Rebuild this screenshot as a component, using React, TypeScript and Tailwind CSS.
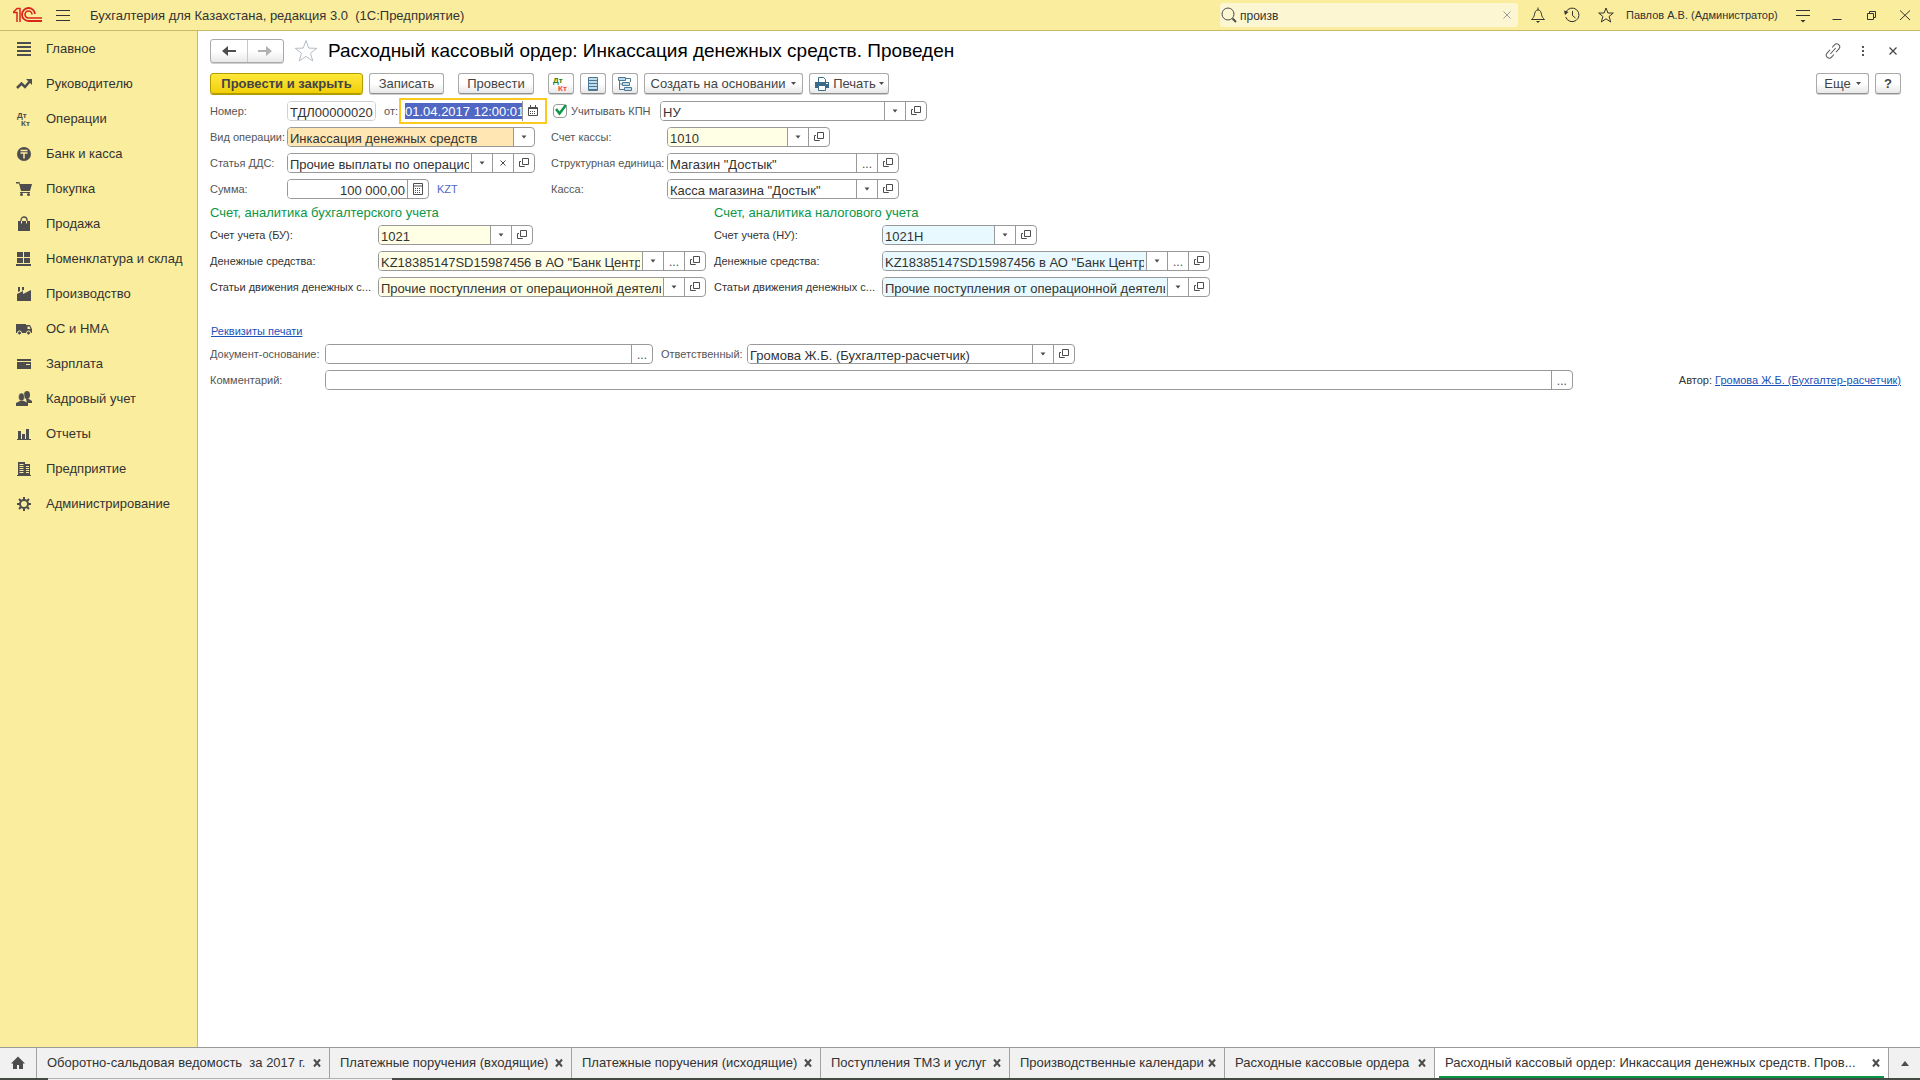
import type { ReactNode } from "react";
import clsx from "clsx";

const INK = "#4d4d4d";

function Icon({ size = 16, children }: { size?: number; children: ReactNode }) {
  return (
    <svg
      width={size}
      height={size}
      viewBox={`0 0 ${size} ${size}`}
      fill="none"
      aria-hidden="true"
      className="shrink-0"
    >
      {children}
    </svg>
  );
}

const menu: { title: string; icon: ReactNode }[] = [
  {
    title: "Главное",
    icon: <path d="M1 1h14v2H1zM1 5h14v2H1zM1 9h14v2H1zM1 13h14v2H1z" fill={INK} />,
  },
  {
    title: "Руководителю",
    icon: (
      <>
        <path d="M1 12l4.500-4.500 3.500 3.500 5-6" stroke={INK} strokeWidth="2.500" />
        <path d="M10 3h6v6z" fill={INK} />
      </>
    ),
  },
  {
    title: "Операции",
    icon: (
      <g fill={INK} fontFamily="Liberation Sans, sans-serif" fontWeight="700" fontSize="8">
        <text x="1" y="7">Дт</text>
        <text x="5" y="15">Кт</text>
      </g>
    ),
  },
  {
    title: "Банк и касса",
    icon: (
      <>
        <circle cx="8" cy="8" r="7" fill={INK} />
        <path d="M4.500 4.500h7M4.500 7h7M8 7v5.500" stroke="#fbed9e" strokeWidth="1.500" />
      </>
    ),
  },
  {
    title: "Покупка",
    icon: (
      <>
        <path d="M0 1h3.500l.5 2h12l-2 7H5L3 2.500H0z" fill={INK} />
        <path d="M4 11.500h10" stroke={INK} />
        <circle cx="5.500" cy="13.500" r="1.500" fill={INK} />
        <circle cx="12.500" cy="13.500" r="1.500" fill={INK} />
      </>
    ),
  },
  {
    title: "Продажа",
    icon: (
      <>
        <path d="M2 5h12v10H2z" fill={INK} />
        <path d="M5 8V4a3 3 0 0 1 6 0v4" stroke={INK} strokeWidth="1.300" />
        <path d="M5.500 5v2.500M10.500 5v2.500" stroke="#fbed9e" />
      </>
    ),
  },
  {
    title: "Номенклатура и склад",
    icon: <path d="M1 1h6v5H1zM8 1h6v5H8zM1 7h6v5H1zM8 7h6v5H8zM0 13h15v2H0z" fill={INK} />,
  },
  {
    title: "Производство",
    icon: <path d="M1 15V8l6-3v3l8-4v11zM2 1h2v4L2 6zM6 1h2v3L6 4.500z" fill={INK} />,
  },
  {
    title: "ОС и НМА",
    icon: (
      <>
        <path d="M0 3h10v9H0zM10 4h4l2 4v4h-6z" fill={INK} />
        <path d="M11.500 5.500h2l1 2.500h-3z" fill="#fbed9e" />
        <circle cx="3.500" cy="12" r="2" fill={INK} stroke="#fbed9e" />
        <circle cx="12.500" cy="12" r="2" fill={INK} stroke="#fbed9e" />
      </>
    ),
  },
  {
    title: "Зарплата",
    icon: <path d="M1 3h14v2H1zM1 6h14v7H1zM10 8v1h4V8z" fill={INK} fillRule="evenodd" />,
  },
  {
    title: "Кадровый учет",
    icon: (
      <g fill={INK}>
        <ellipse cx="11" cy="4" rx="3" ry="4" />
        <path d="M10 8h3l3 2v2h-5z" />
        <ellipse cx="5.500" cy="6" rx="3" ry="4" stroke="#fbed9e" strokeWidth=".5" />
        <path d="M0 15v-3l4-2h4l4 2v3z" />
      </g>
    ),
  },
  {
    title: "Отчеты",
    icon: <path d="M2 5h3v9H2zM6 8h3v6H6zM10 3h3v11h-3zM1 13h14v1H1z" fill={INK} />,
  },
  {
    title: "Предприятие",
    icon: (
      <>
        <path d="M2 1h7v13H2zM9 3h5v11H9zM1 14h14v1H1z" fill={INK} />
        <path
          d="M3.500 3.500h4M3.500 5.500h4M3.500 7.500h4M3.500 9.500h4M3.500 11.500h4M10 5.500h3M10 7.500h3M10 9.500h3M10 11.500h3"
          stroke="#fbed9e"
        />
      </>
    ),
  },
  {
    title: "Администрирование",
    icon: (
      <g stroke={INK}>
        <circle cx="8" cy="8" r="4" strokeWidth="2" />
        <path
          d="M8 1v3M8 12v3M1 8h3M12 8h3M3 3l2 2M11 11l2 2M13 3l-2 2M5 11l-2 2"
          strokeWidth="2"
        />
      </g>
    ),
  },
];

const tabs = [
  { title: "Оборотно-сальдовая ведомость  за 2017 г.", width: "w-[293px]" },
  { title: "Платежные поручения (входящие)", width: "w-[242px]" },
  { title: "Платежные поручения (исходящие)", width: "w-[249px]" },
  { title: "Поступления ТМЗ и услуг", width: "w-[189px]" },
  { title: "Производственные календари", width: "w-[215px]" },
  { title: "Расходные кассовые ордера", width: "w-[210px]" },
];

type Action = "list" | "open" | "clear" | "more" | "calc";

const actionNames: Record<Action, string> = {
  list: "Выбрать из списка",
  open: "Открыть",
  clear: "Очистить",
  more: "Выбрать",
  calc: "Калькулятор",
};

function ActionIcon({ kind }: { kind: Action }) {
  if (kind === "more") return <span className="pt-0.5 text-[12px] leading-4">...</span>;
  return (
    <Icon size={12}>
      {kind === "list" && <path d="M3.500 4.500h5L6 7.500z" fill={INK} />}
      {kind === "clear" && <path d="M3.500 3.500l5 5M8.500 3.500l-5 5" stroke={INK} />}
      {kind === "open" && (
        <path d="M4.500 1.500h6v6h-6zM3 4.500H1.500v5h5V9" stroke={INK} />
      )}
      {kind === "calc" && (
        <>
          <path d="M1.500 .5h9v11h-9zM1.500 3h9" stroke={INK} />
          <path d="M3 5.500h6M3 7.500h6M3 9.500h6" stroke={INK} strokeDasharray="1 1" />
        </>
      )}
    </Icon>
  );
}

interface FieldProps {
  id: string;
  value?: string;
  width: string;
  fill?: string;
  actions?: Action[];
  right?: boolean;
  border?: string;
}

function Field({ id, value = "", width, fill = "bg-white", actions = [], right, border = "border-[#999999]" }: FieldProps) {
  return (
    <div className={clsx("flex h-5 overflow-hidden rounded border bg-white", border, width)}>
      <input
        id={id}
        defaultValue={value}
        className={clsx(
          "min-w-0 flex-1 px-0.5 pt-1 text-[13px] leading-4 text-[#333333] outline-none",
          fill,
          right && "text-right",
        )}
      />
      {actions.map((a) => (
        <button
          key={a}
          type="button"
          aria-label={actionNames[a]}
          className="flex w-[21px] shrink-0 items-center justify-center border-l border-[#999999] text-[#4d4d4d]"
        >
          <ActionIcon kind={a} />
        </button>
      ))}
    </div>
  );
}

function Row({ label, labelWidth, children, ...field }: FieldProps & { label: string; labelWidth: string; children?: ReactNode }) {
  return (
    <div className="flex h-5 items-center">
      <label htmlFor={field.id} className={clsx("shrink-0 whitespace-nowrap", labelWidth)}>
        {label}
      </label>
      <Field {...field} />
      {children}
    </div>
  );
}

function ToolButton({ className, children, label }: { className?: string; children: ReactNode; label?: string }) {
  return (
    <button
      type="button"
      aria-label={label}
      className={clsx(
        "flex h-[21px] items-center justify-center whitespace-nowrap rounded-[3px] border border-[#a9a9a9] border-b-[#8f8f8f] bg-linear-to-b from-white from-50% to-[#e8e8e8] text-[13px] text-[#444444] shadow-[0_1px_0_#d0d0d0]",
        className,
      )}
    >
      {children}
    </button>
  );
}

function Caret() {
  return (
    <svg width="5" height="3" viewBox="0 0 5 3" aria-hidden="true" className="shrink-0">
      <path d="M0 0h5L2.500 3z" fill={INK} />
    </svg>
  );
}

function Header() {
  return (
    <header className="flex h-[31px] shrink-0 items-center border-b border-[#c9ba68] bg-[#fbed9e] text-[#333333]">
      <svg width="30" height="16" viewBox="0 0 30 16" fill="none" className="ml-[13px]" aria-label="1С">
        <path d="M0 5.500l4-4h3V15M0 5.500h4V15" stroke="#d9251c" strokeWidth="1.500" />
        <path
          d="M22 7A6.500 6.500 0 1 0 15.500 14H29"
          stroke="#d9251c"
          strokeWidth="1.800"
        />
        <path d="M19 7.500A3.500 3.500 0 1 0 15.500 11H29" stroke="#d9251c" strokeWidth="1.600" />
      </svg>
      <button type="button" aria-label="Меню" className="ml-3">
        <Icon size={16}>
          <path d="M1 3.500h14M1 8.500h14M1 13.500h14" stroke="#333333" />
        </Icon>
      </button>
      <span className="ml-[19px] flex-1 whitespace-pre pt-px text-[13px]">
        Бухгалтерия для Казахстана, редакция 3.0  (1С:Предприятие)
      </span>
      <div className="flex h-6 w-[298px] items-center rounded-[3px] bg-[#fdf6d2] pl-px">
        <Icon size={16}>
          <circle cx="7" cy="7" r="6" stroke="#4d4d4d" />
          <path d="M11.500 11.500l3.500 3.500" stroke="#4d4d4d" strokeWidth="2" />
        </Icon>
        <input
          aria-label="Поиск"
          defaultValue="произв"
          className="ml-[3px] min-w-0 flex-1 bg-transparent pt-px text-[12px] outline-none"
        />
        <button type="button" aria-label="Очистить поиск" className="mr-[6px]">
          <Icon size={10}>
            <path d="M1.500 1.500l7 7M8.500 1.500l-7 7" stroke="#999999" />
          </Icon>
        </button>
      </div>
      <div className="ml-3 flex items-center gap-[18px]">
        <button type="button" aria-label="Уведомления">
          <Icon>
            <path d="M8 .5V3M8 3C5.500 3 5 5 4.500 7.500 4 10 3 11 1.500 12.500h13C13 11 12 10 11.500 7.500 11 5 10.500 3 8 3z" stroke="#333333" />
            <path d="M6 14h4l-2 2z" fill="#333333" />
          </Icon>
        </button>
        <button type="button" aria-label="История">
          <Icon>
            <path d="M2 5a6.800 6.800 0 1 1-.3 5M8.500 4v4.500l3 2.500" stroke="#333333" />
            <path d="M0 3.500l4.500 1.500L1 8z" fill="#333333" />
          </Icon>
        </button>
        <button type="button" aria-label="Избранное">
          <Icon>
            <path d="M8 1l1.900 5h5.400l-4.200 3.500 1.600 5.500L8 11.800 3.300 15l1.600-5.500L.7 6h5.400z" stroke="#333333" />
          </Icon>
        </button>
      </div>
      <span className="ml-3 w-[158px] whitespace-nowrap pt-px text-[11px]">Павлов А.В. (Администратор)</span>
      <div className="ml-[11px] mr-[7px] flex items-center gap-[18px]">
        <button type="button" aria-label="Настройки">
          <Icon>
            <path d="M1 3.500h14M1 8.500h14" stroke="#333333" />
            <path d="M5.500 13h5L8 15.500z" fill="#333333" />
          </Icon>
        </button>
        <button type="button" aria-label="Свернуть">
          <Icon>
            <path d="M3.500 12.500h9" stroke="#333333" />
          </Icon>
        </button>
        <button type="button" aria-label="Восстановить">
          <Icon>
            <path d="M4.500 6.500h6v6h-6zM6.500 6V4.500h6v6H11" stroke="#333333" />
          </Icon>
        </button>
        <button type="button" aria-label="Закрыть">
          <Icon>
            <path d="M3 3.500l10 9.500M13 3.500L3 13" stroke="#333333" />
          </Icon>
        </button>
      </div>
    </header>
  );
}

function Sidebar() {
  return (
    <nav className="w-[198px] shrink-0 border-r border-[#c9ba68] bg-[#fbed9e]">
      {menu.map((item) => (
        <a
          key={item.title}
          href="#"
          className="flex h-[35px] items-center gap-[14px] whitespace-nowrap pl-4 text-[13px] text-[#333333]"
        >
          <Icon>{item.icon}</Icon>
          {item.title}
        </a>
      ))}
    </nav>
  );
}

function TitleBar() {
  return (
    <div className="flex h-6 items-center">
      <div className="flex h-6 w-[74px] rounded-[3px] border border-[#a9a9a9] bg-linear-to-b from-white from-50% to-[#e8e8e8] shadow-[0_1px_0_#d0d0d0]">
        <button type="button" aria-label="Назад" className="flex flex-1 items-center justify-center border-r border-[#c8c8c8]">
          <Icon>
            <path d="M1 8l6-5v4h8v2H7v4z" fill={INK} />
          </Icon>
        </button>
        <button type="button" aria-label="Вперед" className="flex flex-1 items-center justify-center">
          <Icon>
            <path d="M15 8L9 3v4H1v2h8v4z" fill="#b0b0b0" />
          </Icon>
        </button>
      </div>
      <button type="button" aria-label="В избранное" className="ml-[10px]">
        <Icon size={24}>
          <path d="M12 1.500l2.800 7.600 8 .2-6.300 5 2.300 7.700L12 17.400 5.200 22l2.300-7.700-6.300-5 8-.2z" stroke="#b5bcc6" />
        </Icon>
      </button>
      <h1 className="ml-[10px] flex-1 whitespace-nowrap text-[19px] text-black">
        Расходный кассовый ордер: Инкассация денежных средств. Проведен
      </h1>
      <button type="button" aria-label="Получить ссылку">
        <Icon>
          <g stroke="#555555" transform="rotate(-48 8 8)">
            <path d="M7 5H2.500a3 3 0 0 0 0 6H6M10 5h3.500a3 3 0 0 1 0 6H9M4 8h8" />
          </g>
        </Icon>
      </button>
      <button type="button" aria-label="Еще" className="ml-[14px]">
        <Icon>
          <path d="M7 3h2v2H7zM7 7h2v2H7zM7 11h2v2H7z" fill="#555555" />
        </Icon>
      </button>
      <button type="button" aria-label="Закрыть форму" className="ml-[14px]">
        <Icon>
          <path d="M4.500 4.500l7 7M11.500 4.500l-7 7" stroke="#444444" strokeWidth="1.200" />
        </Icon>
      </button>
    </div>
  );
}

function Toolbar() {
  return (
    <div className="mt-[10px] flex h-[22px] items-start gap-[6px]">
      <button
        type="button"
        className="flex h-[21px] w-[153px] items-center justify-center whitespace-nowrap rounded-[3px] border border-[#b39b00] bg-linear-to-b from-[#ffe838] to-[#f0d000] text-[13px] font-bold text-[#444444] shadow-[0_1px_0_#b39b00]"
      >
        Провести и закрыть
      </button>
      <ToolButton className="w-[75px]">Записать</ToolButton>
      <ToolButton className="ml-2 w-[76px]">Провести</ToolButton>
      <ToolButton className="ml-2 w-[26px]" label="Движения документа">
        <Icon>
          <g fontFamily="Liberation Sans, sans-serif" fontWeight="700" fontSize="8">
            <text x="0" y="7" fill="#2a8000">Дт</text>
            <text x="5" y="15" fill="#ff4040">Кт</text>
          </g>
        </Icon>
      </ToolButton>
      <ToolButton className="w-[26px]" label="Реестр">
        <Icon>
          <path d="M3.500 1.500h9v13h-9z" fill="#c3dcea" stroke="#4a7896" />
          <path d="M3 4.500h10M3 7.500h10M3 10.500h10M3 13.500h10" stroke="#4a7896" />
        </Icon>
      </ToolButton>
      <ToolButton className="w-[26px]" label="Структура подчиненности">
        <Icon>
          <path d="M1.500 1.500h7v3h-7zM5.500 6.500h7v3h-7zM7.500 11.500h7v3h-7z" fill="#c3dcea" stroke="#4a7896" />
          <path d="M9 2.500h4.500V6M2.500 5v8.500H7M2.500 8H5" stroke="#4a7896" />
        </Icon>
      </ToolButton>
      <ToolButton className="w-[159px] gap-[6px]">
        Создать на основании <Caret />
      </ToolButton>
      <ToolButton className="w-[80px] gap-[3px]">
        <Icon>
          <path d="M4.500 1.500h5l2 2V7h-7z" fill="#ffffff" stroke="#3b6a88" />
          <path d="M1 6h14v6H1z" fill="#3b6a88" />
          <path d="M4.500 9.500h7v5h-7z" fill="#ffffff" stroke="#3b6a88" />
          <path d="M12 7.500h2" stroke="#ffffff" />
        </Icon>
        Печать <Caret />
      </ToolButton>
      <div className="flex-1" />
      <ToolButton className="w-[53px] gap-[5px]">
        Еще <Caret />
      </ToolButton>
      <ToolButton className="w-[26px] font-bold">?</ToolButton>
    </div>
  );
}

function DocumentForm() {
  return (
    <div className="mt-[6px] flex">
      <div className="flex w-[341px] shrink-0 flex-col gap-[6px]">
        <Row label="Номер:" labelWidth="w-[77px]" id="number" value="ТДЛ00000020" width="w-[89px]" border="border-[#d0d0d0]">
          <label htmlFor="date" className="ml-2 w-[15px]">
            от:
          </label>
          <div className="flex h-[26px] w-[148px] shrink-0 items-center border-2 border-[#fcc91f] bg-white pl-1">
            <input
              id="date"
              defaultValue="01.04.2017 12:00:01"
              className="h-4 w-[117px] bg-[#5068c4] pt-0.5 text-[13px] leading-4 text-white outline-none"
            />
            <button type="button" aria-label="Календарь" className="flex h-5 w-[21px] items-center justify-center border-l border-[#999999]">
              <Icon size={12}>
                <path d="M1.500 2.500h9v8h-9zM1 3.500h10M3.500 0v3M8.500 0v3" stroke={INK} />
                <path d="M3 6.500h6M3 8.500h6" stroke={INK} strokeDasharray="1 1" />
              </Icon>
            </button>
          </div>
        </Row>
        <Row label="Вид операции:" labelWidth="w-[77px]" id="operation" value="Инкассация денежных средств" width="w-[248px]" fill="bg-[#ffe6b3]" actions={["list"]} />
        <Row label="Статья ДДС:" labelWidth="w-[77px]" id="cashflow" value="Прочие выплаты по операционной деятельности" width="w-[248px]" actions={["list", "clear", "open"]} />
        <Row label="Сумма:" labelWidth="w-[77px]" id="amount" value="100 000,00" width="w-[142px]" right actions={["calc"]}>
          <span className="ml-2 text-[11px] text-[#5068c4]">KZT</span>
        </Row>
      </div>
      <div className="flex flex-col gap-[6px]">
        <div className="flex h-5 items-center">
          <div className="relative ml-0.5 h-[14px] w-[14px]">
            <input
              id="kpn"
              type="checkbox"
              defaultChecked
              className="block h-[14px] w-[14px] appearance-none rounded-sm border border-[#999999] bg-white"
            />
            <svg width="16" height="14" viewBox="0 0 16 14" fill="none" aria-hidden="true" className="pointer-events-none absolute left-0 top-0">
              <path d="M3 5l3.500 4.500L13 1" stroke="#0a9646" strokeWidth="2.500" />
            </svg>
          </div>
          <label htmlFor="kpn" className="ml-1 w-[89px] whitespace-nowrap">
            Учитывать КПН
          </label>
          <Field id="accounting" value="НУ" width="w-[267px]" actions={["list", "open"]} />
        </div>
        <Row label="Счет кассы:" labelWidth="w-[116px]" id="cash-account" value="1010" width="w-[163px]" fill="bg-[#ffffe6]" actions={["list", "open"]} />
        <Row label="Структурная единица:" labelWidth="w-[116px]" id="unit" value={'Магазин "Достык"'} width="w-[232px]" actions={["more", "open"]} />
        <Row label="Касса:" labelWidth="w-[116px]" id="cashbox" value={'Касса магазина "Достык"'} width="w-[232px]" actions={["list", "open"]} />
      </div>
    </div>
  );
}

function AccountGroup({ id, title, accountLabel, account, fill }: { id: string; title: string; accountLabel: string; account: string; fill: string }) {
  return (
    <section className="flex w-[504px] shrink-0 flex-col gap-[6px] text-[#333333]">
      <h2 className="h-5 pt-1 text-[13px] leading-5 text-[#0a9646]">{title}</h2>
      <Row label={accountLabel} labelWidth="w-[168px]" id={`${id}-account`} value={account} width="w-[155px]" fill={fill} actions={["list", "open"]} />
      <Row label="Денежные средства:" labelWidth="w-[168px]" id={`${id}-funds`} value={'KZ18385147SD15987456 в АО "Банк ЦентрКредит"'} width="w-[328px]" fill={fill} actions={["list", "more", "open"]} />
      <Row label="Статьи движения денежных с..." labelWidth="w-[168px]" id={`${id}-flow`} value="Прочие поступления от операционной деятельности" width="w-[328px]" fill={fill} actions={["list", "open"]} />
    </section>
  );
}

function Footer() {
  return (
    <footer className="shrink-0">
      <div className="flex h-[31px] border-t border-[#999999] bg-[#f1f1f1] text-[13px] text-[#333333]">
        <button type="button" aria-label="Начальная страница" className="flex w-[37px] shrink-0 items-center justify-center border-r border-[#a0a0a0]">
          <Icon>
            <path d="M8 1.500L1 8.500h2V14h4v-4h2v4h4V8.500h2z" fill={INK} />
          </Icon>
        </button>
        {tabs.map((tab) => (
          <div key={tab.title} className={clsx("flex shrink-0 items-center border-r border-[#a0a0a0] pl-[10px] pr-[6px]", tab.width)}>
            <a href="#" className="flex-1 whitespace-pre">{tab.title}</a>
            <TabClose />
          </div>
        ))}
        <div className="flex min-w-0 flex-1 items-center border-r border-[#a0a0a0] bg-white px-1">
          <div className="flex h-full min-w-0 flex-1 items-center border-b-2 border-[#0a9646] pl-[6px] pr-0.5 pt-0.5">
            <a href="#" className="min-w-0 flex-1 whitespace-nowrap">
              Расходный кассовый ордер: Инкассация денежных средств. Пров...
            </a>
            <TabClose />
          </div>
        </div>
        <button type="button" aria-label="Список окон" className="flex w-[31px] shrink-0 items-center justify-center">
          <svg width="8" height="5" viewBox="0 0 8 5" aria-hidden="true">
            <path d="M4 0l4 5H0z" fill={INK} />
          </svg>
        </button>
      </div>
      <div className="flex h-0.5 bg-[#454a45]">
        <div className="ml-12 w-[344px] border-t border-[#b0b0b0] bg-[#f1f1f1]" />
      </div>
    </footer>
  );
}

function TabClose() {
  return (
    <button type="button" aria-label="Закрыть вкладку">
      <Icon size={12}>
        <path d="M3 2.500l6 7M9 2.500l-6 7" stroke={INK} strokeWidth="2" />
      </Icon>
    </button>
  );
}

export default function App() {
  return (
    <div className="flex min-h-screen flex-col bg-white font-['Liberation_Sans',Arial,sans-serif]">
      <Header />
      <div className="flex flex-1">
        <Sidebar />
        <main className="min-w-0 flex-1 pl-3 pr-[19px] pt-2 text-[11px] text-[#555555]">
          <TitleBar />
          <Toolbar />
          <DocumentForm />
          <div className="flex">
            <AccountGroup id="bu" title="Счет, аналитика бухгалтерского учета" accountLabel="Счет учета (БУ):" account="1021" fill="bg-[#ffffe6]" />
            <AccountGroup id="nu" title="Счет, аналитика налогового учета" accountLabel="Счет учета (НУ):" account="1021Н" fill="bg-[#e8faff]" />
          </div>
          <a href="#" className="mt-6 block h-5 w-fit pl-px leading-5 text-[#1a52b8] underline">
            Реквизиты печати
          </a>
          <div className="mt-[3px] flex flex-col gap-[6px]">
            <div className="flex">
              <Row label="Документ-основание:" labelWidth="w-[115px]" id="basis" width="w-[328px]" actions={["more"]} />
              <div className="ml-2">
                <Row label="Ответственный:" labelWidth="w-[86px]" id="responsible" value="Громова Ж.Б. (Бухгалтер-расчетчик)" width="w-[328px]" actions={["list", "open"]} />
              </div>
            </div>
            <Row label="Комментарий:" labelWidth="w-[115px]" id="comment" width="flex-1" actions={["more"]}>
              <span className="ml-[106px] shrink-0 whitespace-nowrap text-[#333333]">
                Автор:{" "}
                <a href="#" className="text-[#1a52b8] underline">
                  Громова Ж.Б. (Бухгалтер-расчетчик)
                </a>
              </span>
            </Row>
          </div>
        </main>
      </div>
      <Footer />
    </div>
  );
}
